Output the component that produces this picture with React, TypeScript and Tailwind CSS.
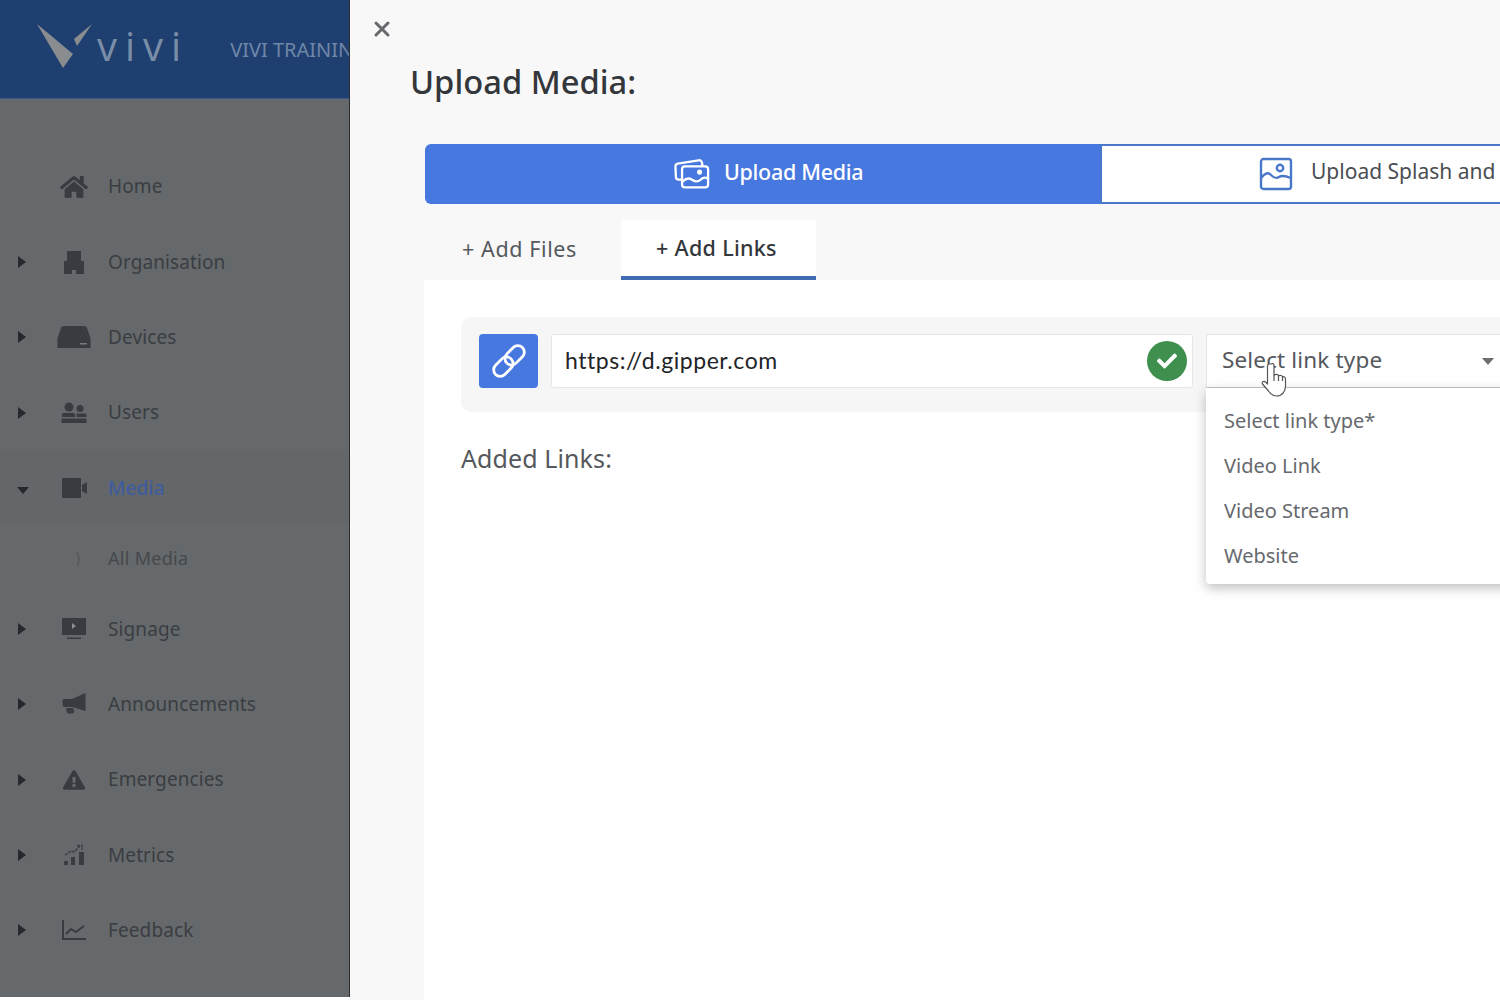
import { FaHome, FaExclamationTriangle, FaCheck } from 'react-icons/fa';
import { FiX } from 'react-icons/fi';
import type { ReactNode } from 'react';

const font = { fontFamily: '"Noto Sans", sans-serif' };

function OrgIcon() {
  return (
    <svg width="24" height="24" viewBox="0 0 24 24" fill="currentColor">
      <path d="M5 1h14v10h3v13h-8v-4h-4v4H2V11h3z" />
    </svg>
  );
}

function DeviceIcon() {
  return (
    <svg width="34" height="22" viewBox="0 0 34 22" fill="currentColor">
      <path d="M7 0h20c1.500 0 2.500.8 3 2l3.500 10v10H.5V12L4 2c.5-1.200 1.500-2 3-2z" />
      <path d="M23 17h7v1.500h-7z" fill="#77797b" />
    </svg>
  );
}

function UsersIcon() {
  return (
    <svg width="26" height="22" viewBox="0 0 26 22" fill="currentColor">
      <circle cx="8" cy="5" r="4.500" />
      <circle cx="19" cy="6.500" r="3.500" />
      <path d="M1 12.500c0-1 1-1.500 2-1.500h9c1 0 2 .5 2 1.500V15H1zM15.500 11.500H24c.8 0 1.500.6 1.500 1.500v2h-10zM0.500 16.500h25V21h-25z" />
    </svg>
  );
}

function VideoIcon() {
  return (
    <svg width="25" height="22" viewBox="0 0 25 22" fill="currentColor">
      <path d="M0 1h19v20H0z" />
      <path d="M20 8l5-3v12l-5-3z" />
    </svg>
  );
}

function SignageIcon() {
  return (
    <svg width="26" height="24" viewBox="0 0 26 24" fill="currentColor">
      <path d="M1 1h24v17H1z" />
      <path d="M11 6l4 3-4 3z" fill="#8b8d8f" />
      <path d="M6 20.500h14V22H6z" />
    </svg>
  );
}

function HornIcon() {
  return (
    <svg width="24" height="22" viewBox="0 0 24 22" fill="currentColor">
      <path d="M23.500 0v18L10 14H3c-1.500 0-2.500-1-2.500-2.500V8C.5 6.500 1.500 6 3 6h7z" />
      <path d="M4 15h7l1 2.500c.5 1.500-.5 3-2 3H7c-1 0-2-.8-2.300-1.800z" />
    </svg>
  );
}

function MetricsIcon() {
  return (
    <svg width="24" height="24" viewBox="0 0 24 24" fill="currentColor">
      <path d="M2 18h4v4H2zM9 14h4v8H9zM17 9h5v13h-5z" />
      <path d="M3 12l6-4 3 1 6-6M15 2.500h5v4.500" fill="none" stroke="currentColor" strokeWidth="1.500" strokeDasharray="3 1" />
    </svg>
  );
}

function FeedbackIcon() {
  return (
    <svg width="26" height="24" viewBox="0 0 26 24" fill="none" stroke="currentColor" strokeWidth="2">
      <path d="M2 2v19h23" />
      <path d="M5 16l5-5 5 3 8-6" />
    </svg>
  );
}

function Logo() {
  return (
    <svg width="56" height="48" viewBox="0 0 56 48" className="shrink-0 -mt-[2px]">
      <path d="M0 0l36 30-10 14z" fill="#8a8d90" />
      <path d="M55 0L37 15l3 7z" fill="#8a8d90" />
    </svg>
  );
}

function GalleryIcon() {
  return (
    <svg width="36" height="32" viewBox="0 0 38 32" fill="none" stroke="#fff" strokeWidth="2.400" strokeLinejoin="round" strokeLinecap="round">
      <path d="M8 22H5a3 3 0 0 1-3-3L1.500 8a3 3 0 0 1 2.500-3L26 1.500a3 3 0 0 1 3.500 2.500l.5 3" />
      <rect x="8.500" y="8" width="27.500" height="22" rx="3" />
      <path d="M9 24c4-4 7-4 10-2s6 3 9 0 5-3 8-1" />
      <circle cx="27" cy="14" r="1.500" fill="#fff" />
    </svg>
  );
}

function PictureIcon() {
  return (
    <svg width="34" height="34" viewBox="0 0 34 34" fill="none" stroke="#4a78c8" strokeWidth="2.400" strokeLinejoin="round">
      <rect x="2" y="2" width="30" height="30" rx="2.500" />
      <circle cx="21" cy="11" r="3.200" />
      <path d="M2 21c4-5 7-6 10-3s5 4 8 2 7-1 12 1" />
    </svg>
  );
}

function ChainIcon() {
  return (
    <svg width="40" height="40" viewBox="0 0 40 40" fill="none" stroke="#fff" strokeWidth="2.800">
      <g transform="rotate(-45 20 20)">
        <rect x="1" y="13.500" width="22" height="13" rx="6.500" />
        <rect x="17" y="13.500" width="22" height="13" rx="6.500" />
      </g>
    </svg>
  );
}

function HandCursor() {
  return (
    <svg width="26" height="36" viewBox="0 0 26 36" fill="#fff" stroke="#555" strokeWidth="1.200" strokeLinejoin="round" className="absolute left-[1261px] top-[362px]">
      <path d="M10 2c1.500-1 3-.5 3 1.500V13c2-1 4-.8 4.500.8 1.800-.8 3.500-.3 4 1 1.800-.4 3 .5 3 2.200V24c0 5-3 10-9 10-4 0-6-2-8-5l-6-7c-1-2 1-3.500 3-2l2 2V4c0-1 .5-1.500 1.500-2z" />
      <path d="M13 13v6M17.500 14v5M21.500 15v4" fill="none" />
    </svg>
  );
}

function NavRow({ icon, label, caret, active, sub }: { icon?: ReactNode; label: string; caret?: 'right' | 'down'; active?: boolean; sub?: boolean }) {
  return (
    <div className={`flex items-center shrink-0 ${sub ? 'h-[66px]' : 'h-[75.300px]'} ${active ? 'bg-[#63676a]' : ''}`}>
      <div className="w-[44px] pl-[17px] shrink-0">
        {caret === 'right' && <div className="w-0 h-0 border-y-[6px] border-y-transparent border-l-[8px] border-l-[#25282c] ml-[1px]" />}
        {caret === 'down' && <div className="w-0 h-0 mt-[5px] border-x-[6px] border-x-transparent border-t-[7px] border-t-[#25282c]" />}
      </div>
      <div className="w-[60px] flex justify-center text-[#383b40] shrink-0">{icon}</div>
      <span className={`ml-[4px] ${sub ? 'text-[18px] text-[#45484c] tracking-[0.3px]' : 'text-[19px] tracking-[0.1px]'} ${active ? 'text-[#3f5c9e] font-medium' : sub ? '' : 'text-[#3a3d42]'}`}>{label}</span>
    </div>
  );
}

export default function App() {
  return (
    <div className="relative flex h-[1000px] w-[1500px] overflow-hidden bg-white" style={font}>
      <aside className="w-[350px] h-[997px] shrink-0 flex flex-col overflow-hidden bg-[#66696b] border-r border-[#2a2c2e]">
        <div className="h-[99px] shrink-0 bg-[#1f3f70] border-b border-[#3a5a88] flex items-center pl-[37px] whitespace-nowrap">
          <Logo />
          <span className="ml-[4px] -mt-[6px] text-[40px] tracking-[8px] text-[#7a8ea8]" style={{ fontFamily: '"Open Sans", sans-serif' }}>vivi</span>
          <span className="ml-[41px] mt-[2px] text-[20px] text-[#6f87a8]">VIVI TRAINING</span>
        </div>
        <div className="pt-[50px] flex flex-col">
          <NavRow label="Home" icon={<FaHome size={28} />} />
          <NavRow label="Organisation" caret="right" icon={<OrgIcon />} />
          <NavRow label="Devices" caret="right" icon={<DeviceIcon />} />
          <NavRow label="Users" caret="right" icon={<UsersIcon />} />
          <NavRow label="Media" caret="down" active icon={<VideoIcon />} />
          <NavRow label="All Media" sub icon={<span className="ml-[8px] text-[16px] text-[#55585b]">)</span>} />
          <NavRow label="Signage" caret="right" icon={<SignageIcon />} />
          <NavRow label="Announcements" caret="right" icon={<HornIcon />} />
          <NavRow label="Emergencies" caret="right" icon={<FaExclamationTriangle size={22} />} />
          <NavRow label="Metrics" caret="right" icon={<MetricsIcon />} />
          <NavRow label="Feedback" caret="right" icon={<FeedbackIcon />} />
        </div>
      </aside>

      <main className="flex-1 min-w-0 overflow-hidden bg-[#f8f8f8] flex flex-col">
        <div className="pl-[20px] pt-[17px] h-[46px] shrink-0 text-[#666a6e]">
          <FiX size={24} strokeWidth={3} />
        </div>
        <h1 className="ml-[60px] mt-[14px] text-[32.700px] leading-[44px] font-medium text-[#33363a] whitespace-nowrap">Upload Media:</h1>

        <div className="ml-[75px] mt-[40px] w-[1200px] h-[60px] shrink-0 flex">
          <div className="w-[675px] bg-[#4778e0] rounded-l-[6px] flex items-center pl-[249px] gap-[14px] text-white text-[21.500px] font-medium tracking-[-0.3px]">
            <GalleryIcon />
            <span className="-mt-[4px]">Upload Media</span>
          </div>
          <div className="flex-1 bg-white border-2 border-[#4a78c8] flex items-center pl-[157px] gap-[18px] text-[21px] text-[#4a4d52] whitespace-nowrap">
            <PictureIcon />
            <span className="-mt-[4px]">Upload Splash and Images</span>
          </div>
        </div>

        <div className="ml-[74px] mt-[16px] flex h-[60px] shrink-0">
          <div className="w-[197px] pl-[38px] flex items-center text-[21.500px] tracking-[0.6px] text-[#55585c] -mt-[2px]">+ Add Files</div>
          <div className="w-[195px] bg-white border-b-4 border-[#3f6cb0] flex items-center justify-center pr-[4px] text-[21.500px] tracking-[0.3px] font-medium text-[#33363a]">+ Add Links</div>
        </div>

        <div className="ml-[74px] w-[1200px] flex-1 bg-white pl-[37px] pt-[37px]">
          <div className="w-[1100px] h-[95px] bg-[#f6f6f6] rounded-[10px] pl-[18px] pt-[17px] flex gap-[13px] items-start">
            <div className="w-[59px] h-[54px] shrink-0 bg-[#4778e0] rounded-[4px] flex items-center justify-center">
              <ChainIcon />
            </div>
            <div className="w-[642px] h-[54px] shrink-0 bg-white border border-[#e6e6e6] rounded-[3px] flex items-center justify-between pl-[13px] pr-[5px]">
              <span className="-mt-[2px] text-[23px] tracking-[0.55px] text-[#222427]" style={{ fontFamily: 'Lato, sans-serif' }}>https://d.gipper.com</span>
              <div className="w-[40px] h-[40px] rounded-full bg-[#3f8f4f] flex items-center justify-center">
                <FaCheck size={20} color="#fff" />
              </div>
            </div>
            <div className="w-[400px] h-[54px] shrink-0 bg-white border border-[#e4e4e4] border-b-[#c4c4c4] rounded-t-[4px] flex items-center pl-[15px] text-[22.500px] tracking-[0.15px] text-[#55585c]">
              <span className="-mt-[2px]">Select link type</span>
              <div className="absolute left-[1482px] top-[358px] w-0 h-0 border-x-[6px] border-x-transparent border-t-[7px] border-t-[#6b6e72]" />
            </div>
          </div>
          <p className="mt-[26px] text-[25px] tracking-[0.1px] leading-[40px] text-[#55585c]">Added Links:</p>
        </div>
      </main>

      <div className="absolute left-[1206px] top-[388px] w-[400px] h-[196px] bg-white rounded-b-[4px] shadow-[0_4px_12px_rgba(0,0,0,0.25)] flex flex-col py-[10px] text-[20px] text-[#66696d]">
        {['Select link type*', 'Video Link', 'Video Stream', 'Website'].map((item) => (
          <div key={item} className="h-[45px] shrink-0 flex items-center pl-[18px]">{item}</div>
        ))}
      </div>
      <HandCursor />
    </div>
  );
}
